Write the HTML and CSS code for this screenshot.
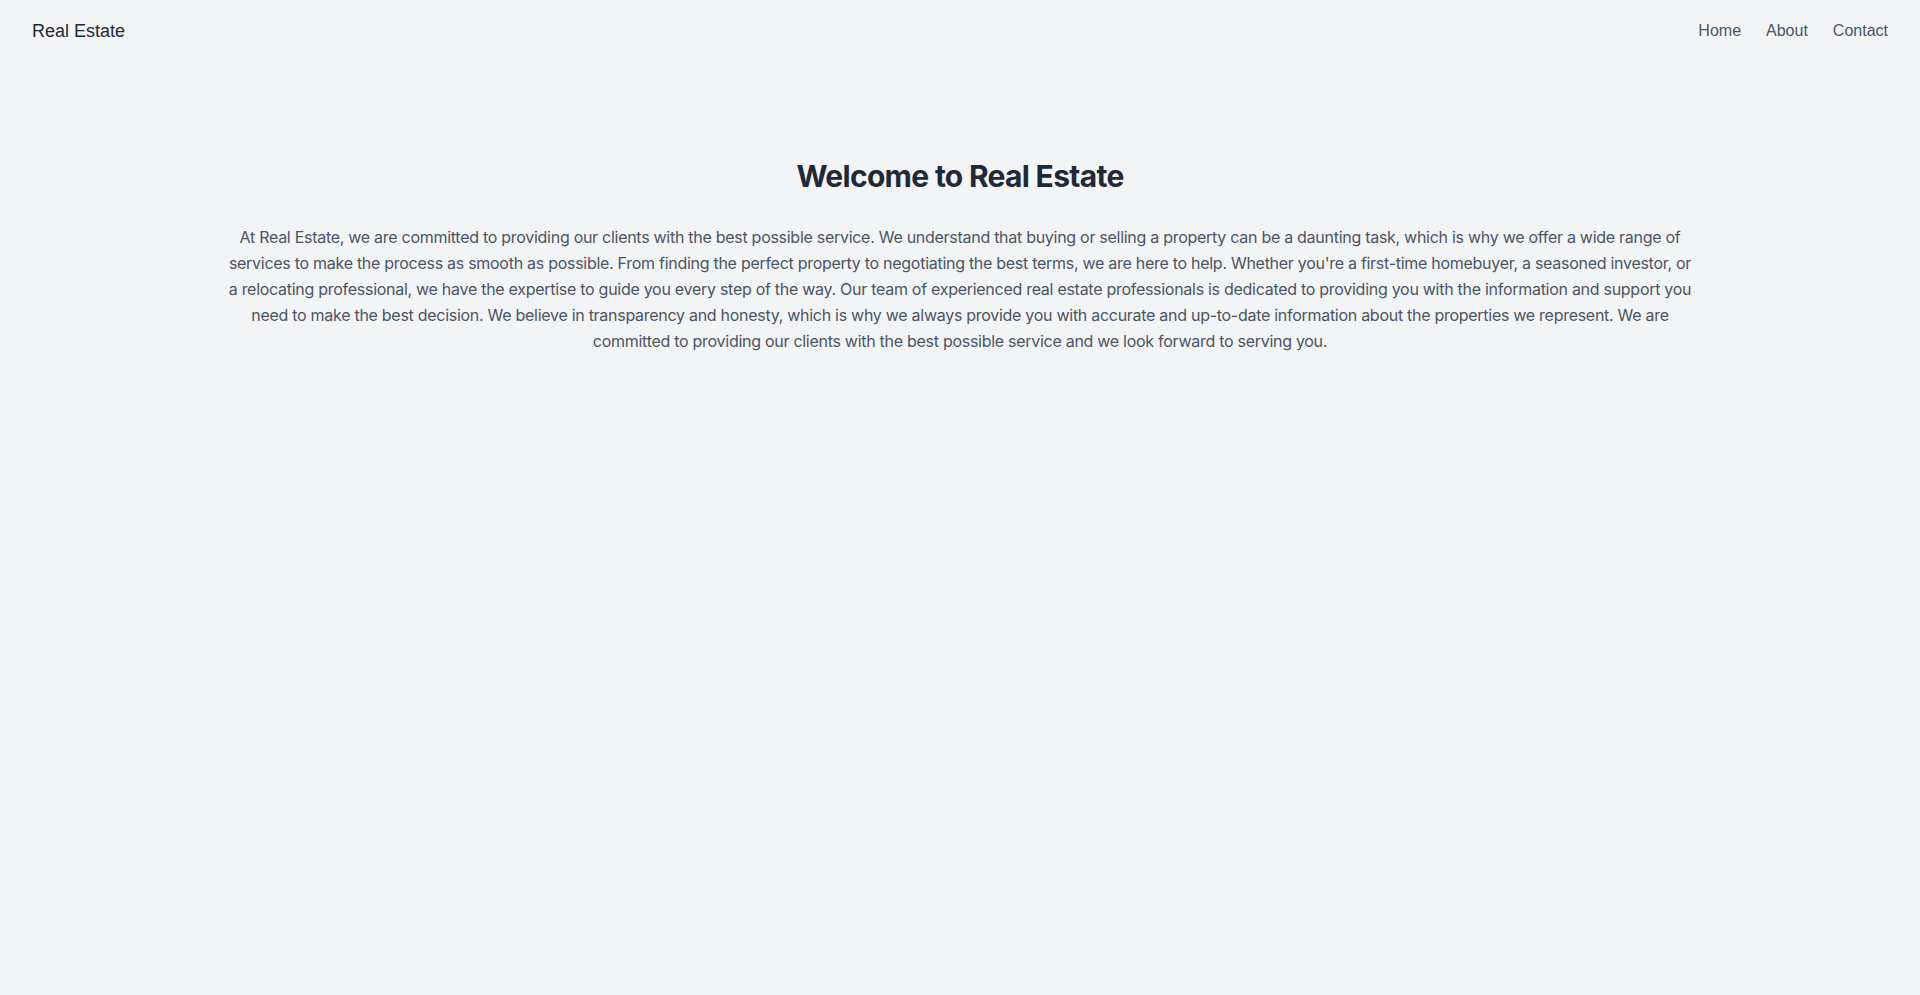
FILE: index.html
```html
<!DOCTYPE html>
<html lang="en">
<head>
<meta charset="utf-8">
<title>Real Estate</title>
<link rel="stylesheet" href="styles.css">
</head>
<body>
<header class="topbar">
  <a class="brand" href="#">Real Estate</a>
  <nav class="nav">
    <a href="#">Home</a>
    <a href="#">About</a>
    <a href="#">Contact</a>
  </nav>
</header>
<main class="main">
  <h1 class="title">Welcome to Real Estate</h1>
  <p class="lead">At Real Estate, we are committed to providing our clients with the best possible service. We understand that buying or selling a property can be a daunting task, which is why we offer a wide range of services to make the process as smooth as possible. From finding the perfect property to negotiating the best terms, we are here to help. Whether you're a first-time homebuyer, a seasoned investor, or a relocating professional, we have the expertise to guide you every step of the way. Our team of experienced real estate professionals is dedicated to providing you with the information and support you need to make the best decision. We believe in transparency and honesty, which is why we always provide you with accurate and up-to-date information about the properties we represent. We are committed to providing our clients with the best possible service and we look forward to serving you.</p>
</main>
</body>
</html>
```

FILE: styles.css
```css
* { box-sizing: border-box; }
html, body { margin: 0; padding: 0; }
body {
  background: #f3f4f6;
  min-height: 995px;
  font-family: "Liberation Sans", Arial, sans-serif;
}
.topbar {
  display: flex;
  justify-content: space-between;
  align-items: center;
  padding: 17px 32px 15px;
}
.brand {
  font-size: 18px;
  line-height: 28px;
  color: #1f2937;
  text-decoration: none;
}
.nav {
  display: flex;
  gap: 25px;
}
.nav a {
  font-size: 16px;
  line-height: 24px;
  color: #4b5563;
  text-decoration: none;
}
.main {
  max-width: 1536px;
  margin: 0 auto;
  padding: 96px 32px 0;
  text-align: center;
}
.title {
  margin: 0 0 28px;
  font-family: Inter, sans-serif;
  font-weight: 700;
  font-size: 30px;
  letter-spacing: -0.7px;
  line-height: 40px;
  color: #1f2937;
}
.lead {
  margin: 0;
  font-family: Inter, sans-serif;
  font-size: 16px;
  letter-spacing: -0.28px;
  line-height: 26px;
  color: #4b5563;
}
```
